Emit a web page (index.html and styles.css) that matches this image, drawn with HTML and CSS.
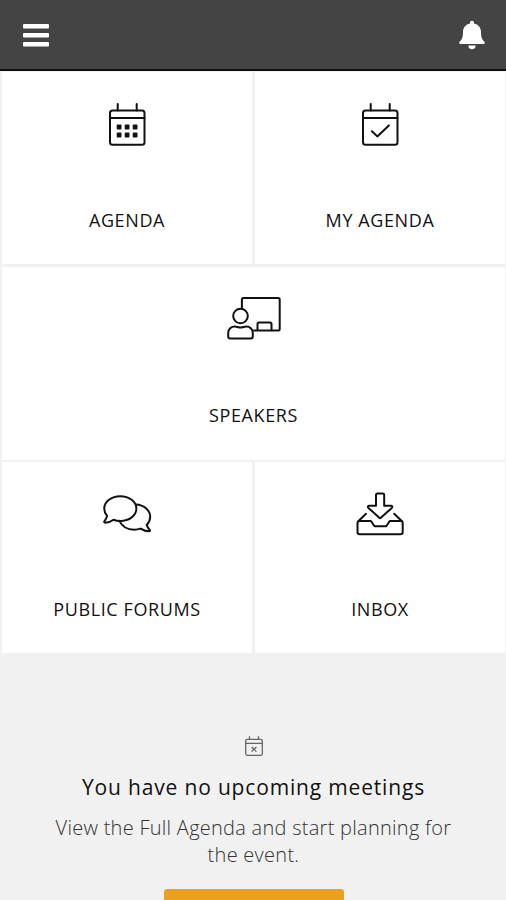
FILE: index.html
```html
<!DOCTYPE html>
<html lang="en">
<head>
    <meta charset="UTF-8">
    <meta name="viewport" content="width=device-width, initial-scale=1.0">
    <title>Event Home</title>
    <link rel="stylesheet" href="styles.css">
</head>
<body>
    <header class="topbar">
        <button class="icon-button" aria-label="Menu">
            <svg width="28" height="26" viewBox="0 0 28 26" fill="#fff">
                <rect x="1" y="2" width="26" height="4.6" rx="1"/>
                <rect x="1" y="11" width="26" height="4.6" rx="1"/>
                <rect x="1" y="20" width="26" height="4.6" rx="1"/>
            </svg>
        </button>
        <button class="icon-button" aria-label="Notifications">
            <svg width="28" height="30" viewBox="0 0 28 30" fill="#fff">
                <path d="M14 0.7c-1.2 0-2 .8-2 2v.7C7.600 4.300 5 7.600 5 12c0 5.500-1 7.500-3.500 9.800-.7.700-.4 2.200.8 2.200h23.400c1.200 0 1.500-1.500.8-2.200C24 19.500 23 17.500 23 12c0-4.400-2.600-7.700-7-8.600v-.7c0-1.200-.8-2-2-2z"/>
                <path d="M10.300 25.500h7.400c0 2.200-1.600 3.800-3.700 3.800s-3.700-1.600-3.700-3.800z"/>
            </svg>
        </button>
    </header>

    <main>
        <nav class="tiles">
            <a class="tile">
                <svg class="tile-icon" viewBox="0 0 60 50">
                    <rect x="13" y="10.500" width="34.500" height="34.300" rx="2.500"/>
                    <path d="M13 18h34.500M20.700 4v6.500M39.700 4v6.500"/>
                    <g class="dots">
                        <rect x="19.700" y="24.600" width="4.800" height="4.800" rx="1"/>
                        <rect x="27.700" y="24.600" width="4.800" height="4.800" rx="1"/>
                        <rect x="35.700" y="24.600" width="4.800" height="4.800" rx="1"/>
                        <rect x="19.700" y="32.600" width="4.800" height="4.800" rx="1"/>
                        <rect x="27.700" y="32.600" width="4.800" height="4.800" rx="1"/>
                        <rect x="35.700" y="32.600" width="4.800" height="4.800" rx="1"/>
                    </g>
                </svg>
                <span>AGENDA</span>
            </a>
            <a class="tile">
                <svg class="tile-icon" viewBox="0 0 60 50">
                    <rect x="13" y="10.500" width="34.500" height="34.300" rx="2.500"/>
                    <path d="M13 18h34.500M20.700 4v6.500M39.700 4v6.500"/>
                    <path d="M21.900 31.200l5.400 5.200 11.600-11"/>
                </svg>
                <span>MY AGENDA</span>
            </a>
            <a class="tile wide">
                <svg class="tile-icon" viewBox="0 0 60 50">
                    <path d="M17.900 12.800V4.600c0-1 .5-1.500 1.500-1.500h34.800c1 0 1.500.5 1.500 1.500v29.300c0 1-.5 1.500-1.500 1.500H30"/>
                    <circle cx="16.500" cy="21" r="7.300"/>
                    <path d="M4.200 41.600v-3.500c0-4 3-6.500 6.500-6.500 2 0 3.500 1 5.800 1s3.800-1 5.800-1c3.500 0 6.500 2.500 6.500 6.500v3.500c0 1.200-.8 2-2 2H6.200c-1.200 0-2-.8-2-2z"/>
                    <path d="M33.500 35.200v-6.200c0-1 .5-1.500 1.500-1.500h11c1 0 1.500.5 1.500 1.500v6.200"/>
                </svg>
                <span>SPEAKERS</span>
            </a>
            <a class="tile">
                <svg class="tile-icon" viewBox="0 0 60 50">
                    <path d="M23.300 6.200c8.900 0 16.100 5.500 16.100 12.400S32.200 31 23.300 31c-2.600 0-4.800-.5-6.800-1.300-2.500 1.900-5.300 2.900-8.300 3-1 0-1.300-.8-.7-1.600 1.300-1.600 2.200-3.400 2.600-5.200-1.900-2.100-2.900-4.600-2.900-7.300 0-6.900 7.200-12.400 16.100-12.400z"/>
                    <path d="M39 14.600c7.700.4 14.200 5.500 14.200 12.200 0 3.200-1.300 5.900-3.500 8.100.5 1.700 1.500 3.400 2.900 4.800.7.800.3 1.600-.6 1.600-3-.1-5.900-1-8.300-2.700-2 .7-4 1.100-6.500 1.100-6.500 0-12.200-3.300-14.800-8.800"/>
                </svg>
                <span>PUBLIC FORUMS</span>
            </a>
            <a class="tile">
                <svg class="tile-icon" viewBox="0 0 60 50">
                    <path d="M27.500 3.600h5.200c1 0 1.500.5 1.500 1.500v10.600h6.700c1.300 0 1.800 1.300.9 2.200L31.100 27.600c-.6.600-1.400.6-2 0L18.400 17.900c-.9-.9-.4-2.200.9-2.200H26V5.100c0-1 .5-1.500 1.500-1.500z"/>
                    <path d="M9.500 31H21l3.500 5.200h11.800L39.700 31h11c1.200 0 2 .8 2 2v9c0 1.300-.9 2.200-2.200 2.200H9.700c-1.300 0-2.200-.9-2.200-2.200V33c0-1.200.8-2 2-2z"/>
                    <path d="M8.500 31l7.500-7.200M51.700 31L44.200 23.800"/>
                </svg>
                <span>INBOX</span>
            </a>
        </nav>

        <section class="meetings">
            <svg class="meetings-icon" width="20" height="22" viewBox="0 0 20 22">
                <rect x="1.700" y="4.300" width="16.600" height="16" rx="1.500"/>
                <path d="M1.700 8.300h16.600M5.500 1.300v3M14.500 1.300v3M7.600 12l4.800 4.600M12.400 12l-4.800 4.600"/>
            </svg>
            <h2>You have no upcoming meetings</h2>
            <p>View the Full Agenda and start planning for the event.</p>
            <button class="agenda-button" aria-label="Full Agenda"></button>
        </section>
    </main>
</body>
</html>
```

FILE: styles.css
```css
* {
    box-sizing: border-box;
}
body {
    margin: 0;
    height: 900px;
    overflow: hidden;
    background: #f1f1f1;
    font-family: 'Open Sans', 'Noto Sans', sans-serif;
}
.topbar {
    display: flex;
    justify-content: space-between;
    align-items: center;
    height: 71px;
    padding: 1px 20px 0 22px;
    background: #444;
    border-bottom: 2px solid #111;
}
.icon-button {
    display: flex;
    padding: 0;
    border: none;
    background: none;
    cursor: pointer;
}
.tiles {
    display: grid;
    grid-template-columns: 1fr 1fr;
    grid-template-rows: 192px 193px 191px;
    gap: 2.5px 3px;
    padding: 1px 1px 0 2px;
}
.tile {
    display: flex;
    flex-direction: column;
    align-items: center;
    padding-top: 28px;
    background: #fff;
    color: #111;
    font-size: 18px;
    line-height: 26px;
    letter-spacing: 0.6px;
}
.tile.wide {
    grid-column: span 2;
}
.tile-icon {
    width: 60px;
    height: 50px;
    margin-bottom: 57px;
    fill: none;
    stroke: #111;
    stroke-width: 2;
    stroke-linecap: round;
    stroke-linejoin: round;
}
.tile.wide ~ .tile .tile-icon {
    margin-bottom: 56px;
}
.dots {
    fill: #111;
    stroke: none;
}
.meetings {
    display: flex;
    flex-direction: column;
    align-items: center;
    padding: 82px 0 0 1px;
    text-align: center;
}
.meetings-icon {
    fill: none;
    stroke: #666;
    stroke-width: 1.3;
}
.meetings h2 {
    margin: 15px 0 0;
    color: #111;
    font-size: 21px;
    font-weight: 400;
    line-height: 30px;
    letter-spacing: 0.83px;
}
.meetings p {
    width: 410px;
    margin: 12px 0 0;
    color: #333;
    font-size: 20px;
    font-weight: 300;
    line-height: 27px;
    letter-spacing: 0.27px;
}
.agenda-button {
    width: 180px;
    height: 50px;
    margin-top: 21px;
    border: none;
    border-radius: 3px;
    background: #eca020;
}
```
